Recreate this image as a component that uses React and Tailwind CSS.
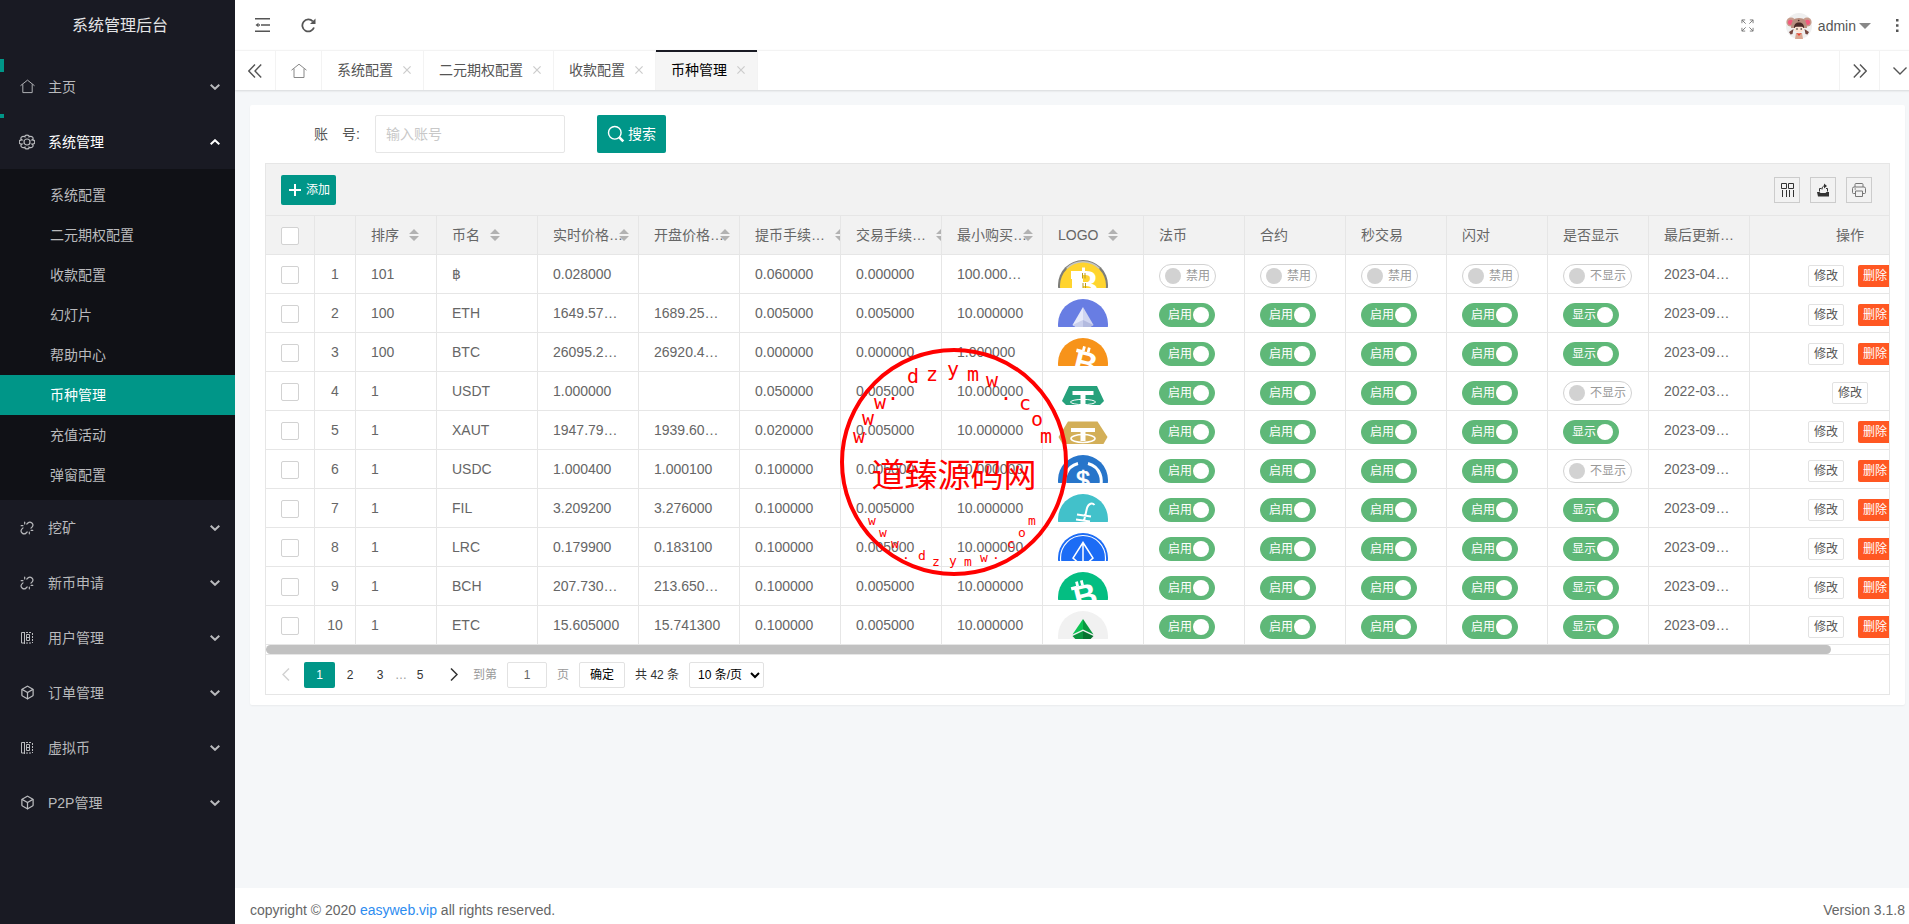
import { useState } from 'react';
import { Box, Unlink } from 'lucide-react';

const HomeIcon = ({ size = 16 }) => (
  <svg width={size} height={size} viewBox="0 0 16 16" fill="none" stroke="currentColor" strokeWidth="1">
    <path d="M0.5 7.2 8 1.2l7.5 6M3 5.6v8.9h10V5.6" />
  </svg>
);

const gearLobes = Array.from({ length: 8 }, (_, i) => {
  const a = ((i * 45 - 22.5) * Math.PI) / 180;
  return `${(8 + 5.6 * Math.cos(a)).toFixed(2)} ${(8 + 5.6 * Math.sin(a)).toFixed(2)}`;
});

const GearIcon = () => (
  <svg width="16" height="16" viewBox="0 0 16 16" fill="none" stroke="currentColor" strokeWidth="1.2" className="-ml-px">
    <path d={`M${gearLobes[0]} ${gearLobes.slice(1).map((p) => `A1.5 1.2 0 0 1 ${p}`).join(' ')} A1.5 1.2 0 0 1 ${gearLobes[0]}Z`} />
    <circle cx="8" cy="8" r="3" />
  </svg>
);

const LedgerIcon = () => (
  <svg width="14" height="14" viewBox="0 0 14 14" fill="none" stroke="currentColor" strokeWidth="1">
    <path d="M4.5 1.5H1.5v10.5h3M4.5 1v12M6.5 3.5h3v6h-3zM6.5 6.5h3" />
    <path d="M6 1.5h6M6 12h6M12.5 2v10" strokeDasharray="2 1" />
  </svg>
);

const Chevron = ({ up }) => (
  <svg width="10" height="6" viewBox="0 0 10 6" fill="none" stroke="currentColor" strokeWidth="2">
    <path d={up ? 'M0.7 5.2 5 1.2l4.3 4' : 'M0.7 0.8 5 4.8l4.3-4'} />
  </svg>
);

const CloseIcon = () => (
  <svg width="8" height="8" viewBox="0 0 8 8" fill="none" stroke="#ccc" strokeWidth="1.2">
    <path d="M0.4 0.4l7.2 7.2M7.6 0.4L0.4 7.6" />
  </svg>
);

const Avatar = () => (
  <svg width="26" height="26" viewBox="0 0 26 26">
    <circle cx="13" cy="13" r="13" fill="#efefef" />
    <circle cx="5" cy="9" r="4.6" fill="#c79c8c" />
    <circle cx="21" cy="9" r="4.6" fill="#c79c8c" />
    <circle cx="4.6" cy="9.3" r="2.6" fill="#f4587d" />
    <circle cx="21.4" cy="9.3" r="2.6" fill="#f4587d" />
    <path d="M5 15c0-7 3-10 8-10s8 3 8 10z" fill="#b98f80" />
    <circle cx="12.7" cy="7.5" r="0.8" fill="#4a2c2a" />
    <path d="M8 15c0-4 2-5.5 5-5.5s5 1.5 5 5.5z" fill="#4b2a28" />
    <ellipse cx="13" cy="16" rx="4.6" ry="3.6" fill="#fde3d3" />
    <path d="M8.5 13.5c2 .4 7 .4 9 0l-1-2.500h-7z" fill="#4b2a28" />
    <circle cx="11" cy="16" r="0.8" fill="#222" />
    <circle cx="15.2" cy="16" r="0.8" fill="#222" />
    <path d="M3 19l4.500-3-1 5-2 .5zM23 19l-4.500-3 1 5 2 .5z" fill="#74463f" />
    <path d="M9 26l1-6h6l1 6z" fill="#d9a792" />
    <path d="M10.5 20l2.500 3 2.500-3-2.500.8z" fill="#f03a2e" />
  </svg>
);

const menus = [
  { name: '主页', icon: <HomeIcon size={15} /> },
  {
    name: '系统管理',
    icon: <GearIcon />,
    children: ['系统配置', '二元期权配置', '收款配置', '幻灯片', '帮助中心', '币种管理', '充值活动', '弹窗配置'],
  },
  { name: '挖矿', icon: <Unlink size={14} /> },
  { name: '新币申请', icon: <Unlink size={14} /> },
  { name: '用户管理', icon: <LedgerIcon /> },
  { name: '订单管理', icon: <Box size={15} /> },
  { name: '虚拟币', icon: <LedgerIcon /> },
  { name: 'P2P管理', icon: <Box size={15} /> },
];

const Sidebar = () => (
  <aside className="w-[235px] shrink-0 bg-[#191a23] text-[#b9babd]">
    <h1 className="flex h-[50px] items-center justify-center pt-px pl-[5px] text-base text-[#e4e4e6]">系统管理后台</h1>
    <nav className="pt-[9px]">
      {menus.map((menu, i) => (
        <div key={menu.name}>
          <a
            href="#"
            className={`relative flex h-[55px] items-center pr-[15px] pl-5 ${menu.children ? 'text-white' : ''}`}
          >
            {i === 0 && <span className="absolute top-0 left-0 h-[13px] w-1 bg-[#009688]" />}
            {i === 1 && <span className="absolute top-0 left-0 h-1 w-1 bg-[#009688]" />}
            <span className="flex w-7 shrink-0 text-[#b9babd]">{menu.icon}</span>
            <span className="flex-1">{menu.name}</span>
            <Chevron up={!!menu.children} />
          </a>
          {menu.children && (
            <ul className="bg-[#101116] pt-[6px] pb-[5px]">
              {menu.children.map((child) => (
                <li key={child}>
                  <a
                    href="#"
                    className={`flex h-10 items-center pl-[50px] ${child === '币种管理' ? 'bg-[#009688] text-white' : ''}`}
                  >
                    {child}
                  </a>
                </li>
              ))}
            </ul>
          )}
        </div>
      ))}
    </nav>
  </aside>
);

const Header = () => (
  <header className="flex h-[50px] items-center justify-between bg-white text-[#555]">
    <div className="flex items-center pl-5">
      <button aria-label="收起菜单" className="w-[46px]">
        <svg width="15" height="14" viewBox="0 0 15 14" fill="none" stroke="currentColor" strokeWidth="1.5">
          <path d="M0 0.8h15M6 7h9M0 13.2h15M3.5 7h1.5" />
          <path d="M3.5 4.8v4.4L0.5 7z" fill="currentColor" stroke="none" />
        </svg>
      </button>
      <button aria-label="刷新">
        <svg width="15" height="15" viewBox="0 0 15 15" fill="none" stroke="currentColor" strokeWidth="1.8">
          <path d="M13 9.5A6 6 0 1 1 11.8 3.4" />
          <path d="M14.5 0.5v5.5H9z" fill="currentColor" stroke="none" />
        </svg>
      </button>
    </div>
    <div className="flex items-center pt-px pr-[21px]">
      <button aria-label="全屏" className="mr-8 text-[#777]">
        <svg width="13" height="13" viewBox="0 0 14 14" fill="none" stroke="currentColor" strokeWidth="1">
          <path d="M1 4.5V1h3.5M1 1l4 4M9.5 1H13v3.5M13 1L9 5M1 9.5V13h3.5M1 13l4-4M9.5 13H13V9.5M13 13L9 9" />
        </svg>
      </button>
      <a href="#" className="mr-[25px] flex items-center">
        <Avatar />
        <span className="mr-[3px] ml-[6px]">admin</span>
        <svg width="12" height="6" viewBox="0 0 12 6" fill="#888">
          <path d="M0 0h12L6 6z" />
        </svg>
      </a>
      <button aria-label="更多">
        <svg width="3" height="13" viewBox="0 0 3 13" fill="currentColor">
          <path d="M0 0h2.5v2.5H0zM0 5.2h2.5v2.5H0zM0 10.4h2.5v2.5H0z" />
        </svg>
      </button>
    </div>
  </header>
);

const tabs = ['系统配置', '二元期权配置', '收款配置', '币种管理'];

const TabBar = () => (
  <div className="relative flex h-10 items-stretch border-t border-[#f3f3f3] bg-white text-[#555] shadow-[0_1px_2px_rgba(0,0,0,0.12)]">
    <button aria-label="向左" className="flex w-[41px] items-center justify-center border-r border-[#f3f3f3]">
      <svg width="14" height="14" viewBox="0 0 14 14" fill="none" stroke="currentColor" strokeWidth="1.4">
        <path d="M7 0.5L0.8 7 7 13.5M13.2 0.5L7 7l6.200 6.500" />
      </svg>
    </button>
    <a href="#" aria-label="首页" className="flex w-[46px] items-center justify-center border-r border-[#f3f3f3] text-[#888]">
      <HomeIcon />
    </a>
    {tabs.map((tab) => {
      const active = tab === '币种管理';
      return (
        <div
          key={tab}
          className={`relative flex items-center border-r border-[#f3f3f3] pr-2 pb-[2px] pl-[15px] ${active ? 'bg-[#f5f5f5] text-black' : ''}`}
        >
          {active && <span className="absolute -top-px right-0 left-0 h-0.5 bg-[#191a23]" />}
          <a href="#">{tab}</a>
          <button aria-label={`关闭${tab}`} className="ml-[6px] flex w-4 justify-center">
            <CloseIcon />
          </button>
        </div>
      );
    })}
    <button aria-label="向右" className="ml-auto flex w-10 items-center justify-center border-l border-[#f3f3f3]">
      <svg width="14" height="14" viewBox="0 0 14 14" fill="none" stroke="currentColor" strokeWidth="1.4">
        <path d="M0.8 0.5L7 7l-6.2 6.5M7 0.5L13.2 7 7 13.5" />
      </svg>
    </button>
    <button aria-label="标签操作" className="flex w-[41px] items-center justify-center border-l border-[#f3f3f3]">
      <svg width="14" height="8" viewBox="0 0 14 8" fill="none" stroke="currentColor" strokeWidth="1.4">
        <path d="M0.5 0.5L7 7l6.5-6.5" />
      </svg>
    </button>
  </div>
);

// coin drawings on a 50x50 box, the table row cuts them off below 28px
const BitcoinMark = ({ rotate }) => (
  <g transform={`rotate(${rotate} 25 25)`} fill="#fff">
    <path d="M21 8.5h2.8v5H21zM26 8.5h2.8v5H26z" />
    <path d="M15.5 12.5h6v3.5h-6z" />
    <text x="16" y="35.5" fontSize="32" fontWeight="bold" fontFamily="Liberation Sans, sans-serif">B</text>
  </g>
);

const coins = {
  '฿': (
    <>
      <circle cx="25" cy="25" r="25" fill="#7d7d78" />
      <path d="M8 8a24 24 0 0 1 34 0l-3 2a21 21 0 0 0-28 0z" fill="#c4c4c0" />
      <circle cx="25" cy="25.5" r="23" fill="#ffd42f" />
      <path d="M13 11h12v17H14v-9h-1z" fill="#fff" />
      <text x="14" y="37" fontSize="37" fontWeight="bold" fill="#fff" fontFamily="Liberation Sans, sans-serif">B</text>
      <path d="M24 7.5h3v5h-3z" fill="#fff" />
      <path d="M24.5 13v5.5M27 13v5.5M25 23v5M27.500 23v5" stroke="#b99a22" strokeWidth="1" />
    </>
  ),
  ETH: (
    <>
      <circle cx="25" cy="25" r="25" fill="#687de3" />
      <path d="M25 8L14.5 26 25 32z" fill="#e6e9fa" />
      <path d="M25 8l10.500 18L25 32z" fill="#d0d5f0" />
      <path d="M25 21l-10.500 5L25 32z" fill="#c9cfec" />
      <path d="M25 21l10.500 5L25 32z" fill="#b3badf" />
    </>
  ),
  BTC: (
    <>
      <circle cx="25" cy="25" r="25" fill="#f7931a" />
      <BitcoinMark rotate={14} />
    </>
  ),
  USDT: (
    <>
      <path d="M11 9h28l7 15-4 4H8l-4-4z" fill="#26a17b" />
      <path d="M14.5 14h21v4h-8v10h-5V18h-8z" fill="#fff" />
      <ellipse cx="25" cy="25" rx="12.5" ry="2.6" fill="none" stroke="#fff" strokeWidth="1" />
    </>
  ),
  XAUT: (
    <>
      <path d="M10 5.5h29.500L49.500 21 42 34H8L0.500 21z" fill="#d3af58" />
      <path d="M13 12h24v4h-9.500v9h-5v-9H13z" fill="#fff" />
      <ellipse cx="25" cy="22.5" rx="12" ry="4" fill="none" stroke="#fff" strokeWidth="1.6" />
    </>
  ),
  USDC: (
    <>
      <circle cx="25" cy="25" r="25" fill="#2775ca" />
      <path d="M20 8.5a17.500 17.500 0 0 0-10 27M30 8.5a17.500 17.500 0 0 1 10 27" fill="none" stroke="#fff" strokeWidth="3" />
      <text x="25" y="34" fontSize="25" textAnchor="middle" fill="#fff" stroke="#fff" strokeWidth="0.6" fontFamily="Liberation Sans, sans-serif">$</text>
    </>
  ),
  FIL: (
    <>
      <circle cx="25" cy="25" r="25" fill="#42c1ca" />
      <path d="M36.5 11c-2-2.500-6-2-7.500 3l-4 17c-1 4-3 6-6 6M19 20.5l14 2M18 25.5l14 2" fill="none" stroke="#fff" strokeWidth="2" />
    </>
  ),
  LRC: (
    <>
      <circle cx="25" cy="25" r="25" fill="#1c6cf5" />
      <circle cx="25" cy="25" r="22.5" fill="none" stroke="#fff" strokeWidth="1.2" />
      <path d="M25 9.5L15 25l10 9 10-9zM25 9.5V34" fill="none" stroke="#fff" strokeWidth="1.5" />
    </>
  ),
  BCH: (
    <>
      <circle cx="25" cy="25" r="25" fill="#04be82" />
      <BitcoinMark rotate={-14} />
    </>
  ),
  ETC: (
    <>
      <circle cx="25" cy="25" r="25" fill="#f1f1f1" />
      <path d="M25 8L14.5 23.5 25 18.500z" fill="#0ec355" />
      <path d="M25 8l10.500 15.500L25 18.500z" fill="#0a9a40" />
      <path d="M25 20l-10.500 5L25 36z" fill="#0b9440" />
      <path d="M25 20l10.500 5L25 36z" fill="#077330" />
    </>
  ),
};

const CoinLogo = ({ name }) => (
  <div className="h-7 w-[50px] overflow-hidden">
    <svg width="50" height="50" viewBox="0 0 50 50" role="img" aria-label={name}>
      {coins[name]}
    </svg>
  </div>
);

const columns = [
  { label: '排序', width: 'w-[81px]', sort: true },
  { label: '币名', width: 'w-[101px]', sort: true },
  { label: '实时价格…', width: 'w-[101px]', sort: true, tight: true },
  { label: '开盘价格…', width: 'w-[101px]', sort: true, tight: true },
  { label: '提币手续…', width: 'w-[101px]', sort: true },
  { label: '交易手续…', width: 'w-[101px]', sort: true },
  { label: '最小购买…', width: 'w-[101px]', sort: true, tight: true },
  { label: 'LOGO', width: 'w-[101px]', sort: true },
  { label: '法币', width: 'w-[101px]' },
  { label: '合约', width: 'w-[101px]' },
  { label: '秒交易', width: 'w-[101px]' },
  { label: '闪对', width: 'w-[101px]' },
  { label: '是否显示', width: 'w-[101px]' },
  { label: '最后更新…', width: 'w-[101px]' },
];

const rows = [
  { sort: 101, name: '฿', price: '0.028000', open: '', withdraw: '0.060000', trade: '0.000000', min: '100.000…', enabled: false, show: false, date: '2023-04…' },
  { sort: 100, name: 'ETH', price: '1649.57…', open: '1689.25…', withdraw: '0.005000', trade: '0.005000', min: '10.000000', enabled: true, show: true, date: '2023-09…' },
  { sort: 100, name: 'BTC', price: '26095.2…', open: '26920.4…', withdraw: '0.000000', trade: '0.000000', min: '1.000000', enabled: true, show: true, date: '2023-09…' },
  { sort: 1, name: 'USDT', price: '1.000000', open: '', withdraw: '0.050000', trade: '0.005000', min: '10.000000', enabled: true, show: false, date: '2022-03…', locked: true },
  { sort: 1, name: 'XAUT', price: '1947.79…', open: '1939.60…', withdraw: '0.020000', trade: '0.005000', min: '10.000000', enabled: true, show: true, date: '2023-09…' },
  { sort: 1, name: 'USDC', price: '1.000400', open: '1.000100', withdraw: '0.100000', trade: '0.005000', min: '10.000000', enabled: true, show: false, date: '2023-09…' },
  { sort: 1, name: 'FIL', price: '3.209200', open: '3.276000', withdraw: '0.100000', trade: '0.005000', min: '10.000000', enabled: true, show: true, date: '2023-09…' },
  { sort: 1, name: 'LRC', price: '0.179900', open: '0.183100', withdraw: '0.100000', trade: '0.005000', min: '10.000000', enabled: true, show: true, date: '2023-09…' },
  { sort: 1, name: 'BCH', price: '207.730…', open: '213.650…', withdraw: '0.100000', trade: '0.005000', min: '10.000000', enabled: true, show: true, date: '2023-09…' },
  { sort: 1, name: 'ETC', price: '15.605000', open: '15.741300', withdraw: '0.100000', trade: '0.005000', min: '10.000000', enabled: true, show: true, date: '2023-09…' },
];

const Checkbox = ({ label }) => (
  <div className="flex h-[38px] items-end px-[15px] pb-[9px]">
    <input
      type="checkbox"
      aria-label={label}
      className="h-[18px] w-[18px] appearance-none rounded-[2px] border border-[#d2d2d2] bg-white checked:border-[#5fb878] checked:bg-[#5fb878]"
    />
  </div>
);

const Switch = ({ initial, on, off, label }) => {
  const [checked, setChecked] = useState(initial);

  return (
    <div className="flex h-[38px] items-end px-[15px] pb-[5px]">
      <label
        className={`relative flex h-6 cursor-pointer items-center rounded-full border text-xs ${
          checked
            ? 'gap-[1px] border-[#5fb878] bg-[#5fb878] pr-[5px] pl-2 text-white'
            : 'gap-[5px] border-[#d2d2d2] bg-white pr-[5px] pl-[5px] text-[#999]'
        }`}
      >
        <input
          type="checkbox"
          role="switch"
          aria-label={label}
          checked={checked}
          onChange={(e) => setChecked(e.target.checked)}
          className="absolute inset-0 cursor-pointer appearance-none"
        />
        {!checked && <span className="h-4 w-4 rounded-full bg-[#d2d2d2]" />}
        <span>{checked ? on : off}</span>
        {checked && <span className="h-4 w-4 rounded-full bg-white" />}
      </label>
    </div>
  );
};

const SortIcon = ({ tight }) => (
  <svg width="10" height="12" viewBox="0 0 10 12" fill="#b2b2b2" className={`shrink-0 ${tight ? '-ml-1' : 'ml-[10px]'}`}>
    <path d="M0 5l5-5 5 5zM0 7l5 5 5-5z" />
  </svg>
);

const cell = 'border-r border-b border-[#e6e6e6] p-0 font-normal';

const TextCell = ({ children }) => (
  <td className={cell}>
    <div className="flex h-[38px] items-center px-[15px] whitespace-nowrap">{children}</div>
  </td>
);

const CoinTable = () => (
  <div className="overflow-hidden">
    <table className="w-[1685px] table-fixed border-separate border-spacing-0 text-left">
      <thead className="bg-[#f2f2f2]">
        <tr>
          <th className={`${cell} w-[49px]`}>
            <Checkbox label="全选" />
          </th>
          <th className={`${cell} w-[41px]`} aria-label="序号" />
          {columns.map((col) => (
            <th key={col.label} className={`${cell} ${col.width}`}>
              <div className="flex h-[38px] items-center overflow-hidden pl-[15px] whitespace-nowrap">
                <span className="shrink-0">{col.label}</span>
                {col.sort && <SortIcon tight={col.tight} />}
              </div>
            </th>
          ))}
          <th className={`${cell} w-[201px] text-center`}>操作</th>
        </tr>
      </thead>
      <tbody>
        {rows.map((row, i) => (
          <tr key={row.name}>
            <td className={cell}>
              <Checkbox label={`选择 ${row.name}`} />
            </td>
            <td className={`${cell} text-center`}>{i + 1}</td>
            <TextCell>{row.sort}</TextCell>
            <TextCell>{row.name}</TextCell>
            <TextCell>{row.price}</TextCell>
            <TextCell>{row.open}</TextCell>
            <TextCell>{row.withdraw}</TextCell>
            <TextCell>{row.trade}</TextCell>
            <TextCell>{row.min}</TextCell>
            <TextCell>
              <CoinLogo name={row.name} />
            </TextCell>
            {['法币', '合约', '秒交易', '闪对'].map((type) => (
              <td key={type} className={cell}>
                <Switch initial={row.enabled} on="启用" off="禁用" label={`${row.name} ${type}`} />
              </td>
            ))}
            <td className={cell}>
              <Switch initial={row.show} on="显示" off="不显示" label={`${row.name} 是否显示`} />
            </td>
            <TextCell>{row.date}</TextCell>
            <td className={cell}>
              <div className="flex h-[38px] items-end justify-center gap-[14px] pb-[6px] text-xs">
                <button className="h-[22px] rounded-[2px] border border-[#e2e2e2] bg-white px-[5px] text-[#555]">修改</button>
                {!row.locked && <button className="h-[22px] rounded-[2px] bg-[#ff5722] px-[5px] text-white">删除</button>}
              </div>
            </td>
          </tr>
        ))}
      </tbody>
    </table>
  </div>
);

const ToolButton = ({ label, children }) => (
  <button aria-label={label} className="flex h-[26px] w-[26px] items-center justify-center border border-[#ccc] text-[#333]">
    {children}
  </button>
);

const Toolbar = () => (
  <div className="flex h-[52px] items-center justify-between border-b border-[#e6e6e6] bg-[#f2f2f2] px-[15px]">
    <button className="flex h-[30px] items-center gap-[5px] rounded-[2px] bg-[#009688] pr-[6px] pl-2 text-xs text-white">
      <svg width="12" height="12" viewBox="0 0 12 12" stroke="currentColor" strokeWidth="2">
        <path d="M6 0v12M0 6h12" />
      </svg>
      添加
    </button>
    <div className="flex gap-[10px] pr-[2px]">
      <ToolButton label="筛选列">
        <svg width="14" height="14" viewBox="0 0 14 14" fill="none" stroke="currentColor" strokeWidth="1">
          <path d="M1.5 0.5h5v5h-5zM8.5 0.5h5v5h-5zM2.5 7v7M6.5 7v7M9.5 7v7M13.5 7v7" />
        </svg>
      </ToolButton>
      <ToolButton label="导出">
        <svg width="14" height="14" viewBox="0 0 14 14" fill="none" stroke="currentColor" strokeWidth="1">
          <path d="M3.5 8.5v-3h2M11.5 8.500V5.5H10M6 6.5c0-2.500 1-3.500 2.500-3.500" />
          <path d="M8 0.5L11 3 8 5.5zM1 9h2.500l1 1h5l1-1H13v4.500H2z" fill="currentColor" stroke="none" />
        </svg>
      </ToolButton>
      <ToolButton label="打印">
        <svg width="14" height="14" viewBox="0 0 14 14" fill="none" stroke="#777" strokeWidth="1">
          <path d="M3 4V1.5Q3 0.5 4 0.5h6q1 0 1 1V4M3 10.5H1.5q-1 0-1-1V5.5q0-1.500 1.500-1.500h10q1.500 0 1.500 1.500v4q0 1-1 1H11" />
          <path d="M3.5 8h7v5.500h-7zM2.5 6h1.500" />
        </svg>
      </ToolButton>
    </div>
  </div>
);

const Pagination = () => (
  <div className="flex h-[39px] items-center pl-[7px] text-xs text-[#333]">
    <button aria-label="上一页" className="mr-[5px] flex w-[26px] justify-center text-[#d2d2d2]">
      <svg width="8" height="13" viewBox="0 0 8 13" fill="none" stroke="currentColor" strokeWidth="1.5">
        <path d="M7 0.5l-6 6 6 6" />
      </svg>
    </button>
    <button className="h-[26px] w-[31px] rounded-[2px] bg-[#009688] text-white">1</button>
    <button className="h-[26px] w-[30px]">2</button>
    <button className="h-[26px] w-[30px]">3</button>
    <span className="w-[10px] text-[#999]">…</span>
    <button className="h-[26px] w-[30px]">5</button>
    <button aria-label="下一页" className="flex w-[38px] justify-center">
      <svg width="8" height="13" viewBox="0 0 8 13" fill="none" stroke="currentColor" strokeWidth="1.5">
        <path d="M1 0.5l6 6-6 6" />
      </svg>
    </button>
    <div className="flex items-center gap-[10px]">
      <label htmlFor="page-no" className="text-[#999]">到第</label>
      <input
        id="page-no"
        defaultValue="1"
        className="h-[26px] w-10 rounded-[2px] border border-[#e2e2e2] text-center text-[#666]"
      />
      <span className="text-[#999]">页</span>
      <button className="h-[26px] rounded-[2px] border border-[#e2e2e2] px-[10px] text-black">确定</button>
      <span>共 42 条</span>
      <select aria-label="每页条数" className="h-[26px] w-[75px] rounded-[2px] border border-[#e2e2e2] bg-white pl-1 text-black">
        <option>10 条/页</option>
        <option>20 条/页</option>
        <option>50 条/页</option>
      </select>
    </div>
  </div>
);

const SearchForm = () => (
  <form className="mb-[10px] flex h-[38px] items-center" onSubmit={(e) => e.preventDefault()}>
    <label htmlFor="account" className="w-[110px] pr-[15px] text-right text-[#555]">账&emsp;号:</label>
    <input
      id="account"
      placeholder="输入账号"
      className="h-[38px] w-[190px] rounded-[2px] border border-[#e6e6e6] px-[10px] placeholder:text-[#c8c8c8]"
    />
    <button className="ml-8 flex h-[38px] items-center gap-[3px] rounded-[2px] bg-[#009688] px-[10px] text-white">
      <svg width="18" height="18" viewBox="0 0 18 18" fill="none" stroke="currentColor" strokeWidth="1.4">
        <circle cx="7.8" cy="7.8" r="6.3" />
        <path d="M12.3 12.3l4 4" strokeWidth="2.6" />
      </svg>
      搜索
    </button>
  </form>
);

// [letter, x, baseline] measured from the centre of the seal
const sealTop = [
  ['w', -95, -19], ['w', -86, -37], ['w', -74, -53], ['.', -61, -62], ['d', -41, -79], ['z', -22, -81], ['y', -1, -86],
  ['m', 19, -81], ['w', 38, -75], ['.', 52, -62], ['c', 71, -52], ['o', 83, -36], ['m', 92, -19],
];
const sealBottom = [
  ['w', -82, 63], ['w', -71, 75], ['w', -59, 86], ['.', -48, 97], ['d', -32, 98], ['z', -18, 104], ['y', -1, 103],
  ['m', 14, 104], ['w', 30, 100], ['.', 42, 97], ['c', 57, 86], ['o', 68, 75], ['m', 78, 63],
];

const Seal = () => (
  <svg
    width="230"
    height="230"
    viewBox="-115 -115 230 230"
    fill="#f00"
    textAnchor="middle"
    className="pointer-events-none absolute top-[347px] left-[839px]"
    fontFamily="DejaVu Sans Mono, monospace"
  >
    <circle r="112" fill="none" stroke="#f00" strokeWidth="4" />
    {sealTop.map(([ch, x, y]) => (
      <text key={x} x={x} y={y} fontSize="20">{ch}</text>
    ))}
    <text x="0" y="25" fontSize="33" fontFamily="Noto Sans CJK SC, sans-serif">道臻源码网</text>
    {sealBottom.map(([ch, x, y]) => (
      <text key={x} x={x} y={y} fontSize="13">{ch}</text>
    ))}
  </svg>
);

const App = () => (
  <div className="relative flex h-screen overflow-hidden bg-[#f5f7f9] font-['Liberation_Sans','Noto_Sans_CJK_SC',sans-serif] text-sm text-[#666]">
    <Sidebar />
    <div className="-mr-[11px] -mb-2 flex min-w-0 flex-1 flex-col">
      <Header />
      <TabBar />
      <main className="flex-1 p-[15px]">
        <section className="rounded-[2px] bg-white px-[15px] py-[10px] shadow-[0_1px_2px_rgba(0,0,0,0.05)]">
          <SearchForm />
          <div className="border border-[#e6e6e6]">
            <Toolbar />
            <CoinTable />
            <div className="h-[10px] border-b border-[#e6e6e6] pr-[58px]">
              <div className="h-[9px] rounded-full bg-[#c1c1c1]" />
            </div>
            <Pagination />
          </div>
        </section>
      </main>
      <footer className="flex h-11 items-center justify-between bg-white px-[15px]">
        <p>
          copyright © 2020 <a href="#" className="text-[#2d8cf0]">easyweb.vip</a> all rights reserved.
        </p>
        <span>Version 3.1.8</span>
      </footer>
    </div>
    <Seal />
  </div>
);

export default App;
